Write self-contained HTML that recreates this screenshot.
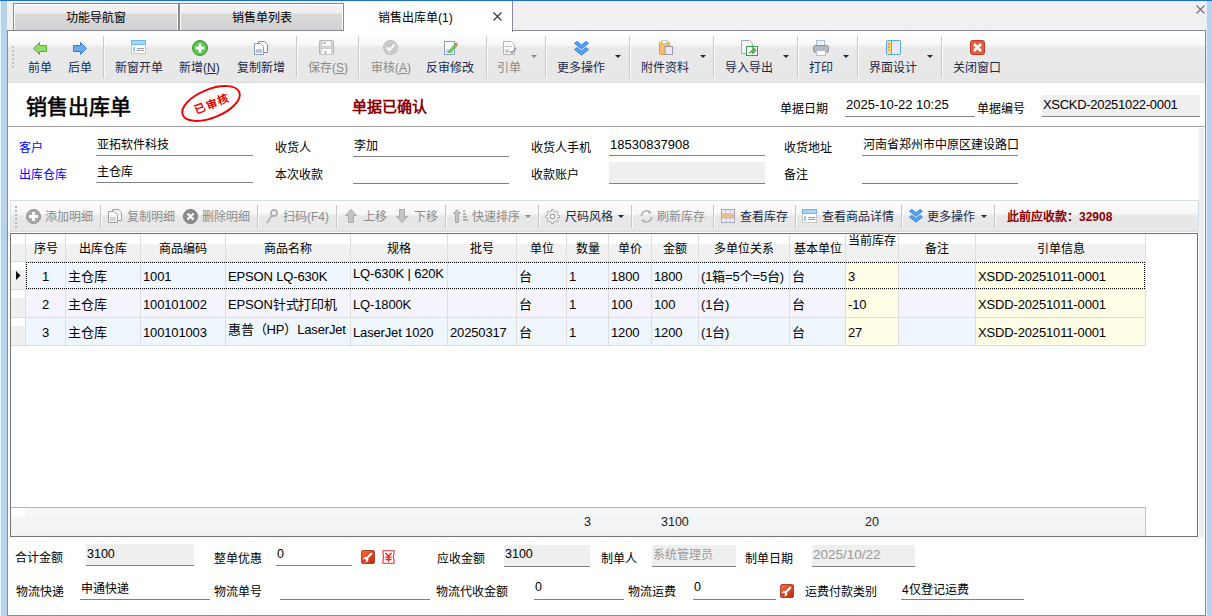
<!DOCTYPE html>
<html lang="zh-CN">
<head>
<meta charset="utf-8">
<style>
*{box-sizing:border-box;margin:0;padding:0}
html,body{width:1212px;height:616px;overflow:hidden;background:#fff;font-family:"Liberation Sans",sans-serif;font-size:12px;color:#000}
.a{position:absolute;white-space:nowrap}
.tab{top:3px;height:28px;border:1px solid #878a92;border-bottom:none;box-shadow:inset 1px 1px 0 #fff,inset -1px 0 0 #fff;background:linear-gradient(#f3f3f3 0,#efefef 9px,#d9d9d9 10px,#d2d2d2 100%);text-align:center;line-height:29px;font-size:12px;color:#000}
.tbl{top:58px;font-size:12px;color:#1c2a48}
.tbl.dis{color:#8a8a8a}
.sep{top:36px;width:2px;height:42px;background:linear-gradient(90deg,#c9c9c9 50%,#fbfbfb 50%)}
.dd{width:0;height:0;border-left:3px solid transparent;border-right:3px solid transparent;border-top:3px solid #1c2a48;top:55px}
.blue{color:#0000ff}
.ul{height:1px;background:#828282}
.gf{background:#efefef}
</style>
</head>
<body>
<div class="a" style="left:0;top:0;width:7px;height:616px;background:#b9d1ea;border-left:1px solid #e2f6fe"></div>
<div class="a" style="left:1206px;top:0;width:6px;height:616px;background:#b9d1ea;border-left:1px solid #e4eef8"></div>
<div class="a" style="left:7px;top:1px;width:1199px;height:29px;background:#f0f0f0"></div>
<div class="a" style="left:0;top:0;width:1212px;height:1px;background:#1a6fd0"></div>
<div class="a tab" style="left:13px;width:166px">功能导航窗</div>
<div class="a tab" style="left:179px;width:165px">销售单列表</div>
<svg class="a" style="left:1196px;top:5px" width="9" height="9" viewBox="0 0 9 9"><path d="M0.5 0.5l8 8M8.5 0.5l-8 8" stroke="#6a7080" stroke-width="1.1"/></svg>
<div class="a" style="left:7px;top:30px;width:1199px;height:53px;border-top:1px solid #878a92;border-left:1px solid #878a92;border-right:1px solid #878a92;background:linear-gradient(#fff 0,#f7f7f7 14px,#e9e9e9 16px,#e7e7e7 100%)"></div>
<div class="a" style="left:8px;top:31px;width:1196px;height:1px;background:#fff"></div>
<div class="a" style="left:344px;top:1px;width:169px;height:31px;background:#fff;border-right:1px solid #878a92"></div>
<div class="a" style="left:512px;top:30px;width:1px;height:1px;background:#878a92"></div>
<div class="a" style="left:12px;top:46px;width:2px;height:23px;background:repeating-linear-gradient(#c4c4c4 0,#c4c4c4 2px,transparent 2px,transparent 4px)"></div>
<div class="a" style="left:378px;top:8px;font-size:12px">销售出库单(1)</div>
<svg class="a" style="left:493px;top:12px" width="9" height="9" viewBox="0 0 9 9"><path d="M0.5 0.5l8 8M8.5 0.5l-8 8" stroke="#333" stroke-width="1.1"/></svg>

<svg class="a" style="left:33px;top:42px" width="14" height="13" viewBox="0 0 14 13"><path d="M0.5 6.5 L6.5 0.5 V3.5 H13.5 V9.5 H6.5 V12.5 Z" fill="#8fdc6a" stroke="#52b535" stroke-width="1"/></svg>
<svg class="a" style="left:73px;top:42px" width="14" height="13" viewBox="0 0 14 13"><path d="M13.5 6.5 L7.5 0.5 V3.5 H0.5 V9.5 H7.5 V12.5 Z" fill="#6aa9ee" stroke="#3a7fd0" stroke-width="1"/></svg>
<svg class="a" style="left:131px;top:40px" width="15" height="14" viewBox="0 0 15 14"><rect x="0.5" y="0.5" width="14" height="13" fill="#fff" stroke="#c8c8c8"/><rect x="0.5" y="0.5" width="14" height="4" fill="#a6d6f6" stroke="#6cb8ea"/><rect x="2" y="7" width="2" height="5" fill="#9cccf0"/><rect x="6" y="8" width="7" height="1" fill="#a0a0a0"/><rect x="6" y="10" width="7" height="1" fill="#a0a0a0"/></svg>
<svg class="a" style="left:192px;top:40px" width="16" height="16" viewBox="0 0 16 16"><circle cx="8" cy="8" r="7.5" fill="#5cc24a" stroke="#3a9a2e"/><path d="M6.5 3.5h3v3h3v3h-3v3h-3v-3h-3v-3h3z" fill="#fff"/></svg>
<svg class="a" style="left:254px;top:41px" width="15" height="14" viewBox="0 0 15 14"><path d="M4.5 0.5h6l3 3v8h-9z" fill="#fff" stroke="#9a7ac8"/><path d="M0.5 2.5h6l3 3v8h-9z" fill="#fff" stroke="#8a9cc0"/><rect x="2" y="8" width="6" height="4" fill="#b8c4e4"/></svg>
<svg class="a" style="left:319px;top:40px" width="15" height="15" viewBox="0 0 15 15"><rect x="0.5" y="0.5" width="14" height="14" rx="1" fill="#d4d4d4" stroke="#b4b4b4"/><rect x="3" y="1" width="9" height="5.5" fill="#fbfbfb" stroke="#c4c4c4" stroke-width="0.6"/><rect x="2.5" y="8.5" width="10" height="6" fill="#fbfbfb" stroke="#c4c4c4" stroke-width="0.6"/><rect x="4.5" y="2" width="2" height="2" fill="#a8a8a8"/><rect x="5.5" y="11" width="2" height="3.5" fill="#b8b8b8"/></svg>
<svg class="a" style="left:383px;top:40px" width="15" height="15" viewBox="0 0 15 15"><circle cx="7.5" cy="7.5" r="6.8" fill="#d6d6d6" stroke="#bcbcbc" stroke-width="1.2"/><circle cx="7.5" cy="7.5" r="5.2" fill="#c8c8c8"/><path d="M4 7.5l2.5 2.8 4.8-5.5" fill="none" stroke="#fafafa" stroke-width="2.2"/></svg>
<svg class="a" style="left:444px;top:41px" width="14" height="14" viewBox="0 0 14 14"><rect x="0.5" y="0.5" width="10" height="13" fill="#fff" stroke="#8aa0c8"/><rect x="2" y="8" width="7" height="4" fill="#c8d4ec"/><path d="M4 11 L11 3 L13 5 L6 12 Z" fill="#6cd050" stroke="#48a838" stroke-width="0.6"/><circle cx="12" cy="3" r="1.6" fill="#f07070"/></svg>
<svg class="a" style="left:503px;top:41px" width="14" height="14" viewBox="0 0 14 14"><path d="M0.5 0.5h8l3 3v10h-11z" fill="#fafafa" stroke="#b4b4b4"/><rect x="2" y="5" width="7" height="1" fill="#c0c0c0"/><rect x="2" y="8" width="4" height="4" fill="#d0d0d0"/><path d="M7 10l2 2 4-5" fill="none" stroke="#9a9a9a" stroke-width="1.6"/></svg>
<svg class="a" style="left:574px;top:41px" width="15" height="15" viewBox="0 0 15 15"><path d="M0.5 2.4L3 0.4 7.5 3.9 12 0.4 14.5 2.4 7.5 7.9z M0.5 8.6L3 6.6 7.5 10.1 12 6.6 14.5 8.6 7.5 14.1z" fill="#4ea4f4" stroke="#2c6fd6" stroke-width="0.8" stroke-linejoin="round"/></svg>
<svg class="a" style="left:659px;top:40px" width="14" height="15" viewBox="0 0 14 15"><rect x="0.5" y="2" width="10" height="12.5" rx="1.5" fill="#f8bc6a" stroke="#e89a40"/><rect x="3" y="0.5" width="5" height="3" fill="#fff" stroke="#aaa" stroke-width="0.6"/><rect x="6" y="6.5" width="7.5" height="8" fill="#e8e8f4" stroke="#9a9aa8"/></svg>
<svg class="a" style="left:741px;top:40px" width="17" height="16" viewBox="0 0 17 16"><path d="M0.5 0.5h8l3 3v10h-11z" fill="#f4f6ff" stroke="#9aa8d8"/><rect x="5.5" y="6.5" width="11" height="9" fill="#fff" stroke="#3aa040"/><path d="M8 13c3 0 2-3 4-3v-2l2.5 2.5-2.5 2.5v-2" fill="none" stroke="#3aa040" stroke-width="1.4"/></svg>
<svg class="a" style="left:813px;top:40px" width="16" height="16" viewBox="0 0 16 16"><rect x="3.5" y="0.5" width="8" height="6" fill="#eef4ff" stroke="#a8c0e8"/><rect x="0.5" y="5.5" width="15" height="7" rx="2" fill="#b8b8b8" stroke="#909090"/><rect x="3.5" y="10.5" width="9" height="5" fill="#fff" stroke="#a8c0e8"/></svg>
<svg class="a" style="left:886px;top:40px" width="15" height="15" viewBox="0 0 15 15"><rect x="0.5" y="0.5" width="14" height="14" rx="1" fill="#e8e8fa" stroke="#58a8e8"/><rect x="1" y="1" width="4" height="13" fill="#f8e070"/><path d="M2 4h2M2 7h2M2 10h2" stroke="#e06060" stroke-width="1"/><rect x="5" y="1" width="1" height="13" fill="#58a8e8"/></svg>
<svg class="a" style="left:970px;top:40px" width="15" height="15" viewBox="0 0 15 15"><rect x="0.5" y="0.5" width="14" height="14" rx="2" fill="#e85a40" stroke="#c03a28"/><path d="M4 4l7 7M11 4l-7 7" stroke="#fff" stroke-width="2.8"/></svg>

<div class="a tbl" style="left:28px">前单</div>
<div class="a tbl" style="left:68px">后单</div>
<div class="a sep" style="left:103px"></div>
<div class="a tbl" style="left:115px">新窗开单</div>
<div class="a tbl" style="left:179px">新增(<u>N</u>)</div>
<div class="a tbl" style="left:237px">复制新增</div>
<div class="a sep" style="left:296px"></div>
<div class="a tbl dis" style="left:308px">保存(<u>S</u>)</div>
<div class="a sep" style="left:358px"></div>
<div class="a tbl dis" style="left:371px">审核(<u>A</u>)</div>
<div class="a tbl" style="left:426px">反审修改</div>
<div class="a sep" style="left:486px"></div>
<div class="a tbl dis" style="left:497px">引单</div>
<div class="a dd" style="left:531px;border-top-color:#8a8a8a"></div>
<div class="a sep" style="left:545px"></div>
<div class="a tbl" style="left:557px">更多操作</div>
<div class="a dd" style="left:615px"></div>
<div class="a sep" style="left:629px"></div>
<div class="a tbl" style="left:641px">附件资料</div>
<div class="a dd" style="left:700px"></div>
<div class="a sep" style="left:713px"></div>
<div class="a tbl" style="left:725px">导入导出</div>
<div class="a dd" style="left:783px"></div>
<div class="a sep" style="left:797px"></div>
<div class="a tbl" style="left:809px">打印</div>
<div class="a dd" style="left:843px"></div>
<div class="a sep" style="left:857px"></div>
<div class="a tbl" style="left:869px">界面设计</div>
<div class="a dd" style="left:927px"></div>
<div class="a sep" style="left:941px"></div>
<div class="a tbl" style="left:953px">关闭窗口</div>
<div class="a" style="left:7px;top:82px;width:1px;height:534px;background:#878a92"></div>
<div class="a" style="left:1205px;top:30px;width:1px;height:586px;background:#878a92"></div>
<div class="a" style="left:1204px;top:83px;width:1px;height:531px;background:#fff"></div>
<div class="a" style="left:7px;top:615px;width:1199px;height:1px;background:#878a92"></div>
<div class="a" style="left:8px;top:82px;width:1196px;height:1px;background:#d8d8d8"></div>
<div class="a" style="left:26px;top:90px;font-family:'Liberation Serif',serif;font-size:21px;font-weight:normal;-webkit-text-stroke:0.6px #000">销售出库单</div>
<svg class="a" style="left:176px;top:83px" width="72" height="42" viewBox="0 0 72 42"><ellipse cx="35" cy="20.5" rx="30.5" ry="14.2" transform="rotate(-22 35 20.5)" fill="none" stroke="#f00000" stroke-width="1.9"/><text x="36" y="25" text-anchor="middle" transform="rotate(-20 35 20.5)" font-family="Liberation Sans" font-size="11" font-weight="bold" fill="#f00000" letter-spacing="1.6">已审核</text></svg>
<div class="a" style="left:352px;top:95px;font-size:15px;font-weight:bold;color:#8b0000">单据已确认</div>
<div class="a" style="left:780px;top:99px">单据日期</div>
<div class="a" style="left:846px;top:97px;font-size:13px">2025-10-22 10:25</div>
<div class="a ul" style="left:845px;top:116px;width:130px"></div>
<div class="a" style="left:977px;top:99px">单据编号</div>
<div class="a gf" style="left:1042px;top:95px;width:158px;height:21px"></div>
<div class="a" style="left:1043px;top:97px;font-size:13px;letter-spacing:-0.3px">XSCKD-20251022-0001</div>
<div class="a ul" style="left:1042px;top:116px;width:158px"></div>
<div class="a" style="left:8px;top:126px;width:1197px;height:1px;background:#a0a0a0"></div>
<div class="a" style="left:1199px;top:128px;width:5px;height:410px;background:#efefef"></div>
<div class="a" style="left:19px;top:138px;color:#0000ff">客户</div>
<div class="a ul" style="left:96px;top:155px;width:157px"></div>
<div class="a" style="left:97px;top:135px;font-size:12px">亚拓软件科技</div>
<div class="a" style="left:19px;top:165px;color:#0000ff">出库仓库</div>
<div class="a ul" style="left:96px;top:182px;width:157px"></div>
<div class="a" style="left:97px;top:162px;font-size:12px">主仓库</div>
<div class="a" style="left:275px;top:138px">收货人</div>
<div class="a ul" style="left:353px;top:156px;width:156px"></div>
<div class="a" style="left:354px;top:136px;font-size:12px">李加</div>
<div class="a" style="left:275px;top:165px">本次收款</div>
<div class="a ul" style="left:353px;top:183px;width:156px"></div>
<div class="a" style="left:531px;top:138px">收货人手机</div>
<div class="a ul" style="left:609px;top:155px;width:156px"></div>
<div class="a" style="left:610px;top:137px;font-size:13px">18530837908</div>
<div class="a" style="left:531px;top:165px">收款账户</div>
<div class="a gf" style="left:609px;top:162px;width:156px;height:21px"></div>
<div class="a ul" style="left:609px;top:183px;width:156px"></div>
<div class="a" style="left:784px;top:138px">收货地址</div>
<div class="a ul" style="left:862px;top:155px;width:156px"></div>
<div class="a" style="left:863px;top:135px;font-size:12px">河南省郑州市中原区建设路口</div>
<div class="a" style="left:784px;top:165px">备注</div>
<div class="a ul" style="left:862px;top:183px;width:156px"></div>
<div class="a" style="left:10px;top:200px;width:1189px;height:32px;border:1px solid #d3dee9;background:linear-gradient(#fefefe 0,#f6f6f6 13px,#e8e8e8 15px,#e6e6e6 100%)"></div>
<div class="a" style="left:15px;top:206px;width:2px;height:22px;background:repeating-linear-gradient(#b8b8b8 0,#b8b8b8 2px,transparent 2px,transparent 4px)"></div>
<svg class="a" style="left:26px;top:209px" width="15" height="15" viewBox="0 0 15 15"><circle cx="7.5" cy="7.5" r="7" fill="#a8a8a8" stroke="#909090"/><path d="M6 3h3v3h3v3h-3v3h-3v-3h-3v-3h3z" fill="#fff"/></svg>
<div class="a" style="left:45px;top:207px;color:#8c8c8c">添加明细</div>
<div class="a" style="left:100px;top:205px;width:2px;height:23px;background:linear-gradient(90deg,#c6c6c6 50%,#fbfbfb 50%)"></div>
<svg class="a" style="left:108px;top:209px" width="14" height="14" viewBox="0 0 14 14"><path d="M4.5 0.5h6l3 3v8h-9z" fill="#f4f4f4" stroke="#a0a0a0"/><path d="M0.5 2.5h6l3 3v8h-9z" fill="#fafafa" stroke="#a0a0a0"/><rect x="2" y="8" width="6" height="4" fill="#d4d4d4"/></svg>
<div class="a" style="left:127px;top:207px;color:#8c8c8c">复制明细</div>
<svg class="a" style="left:183px;top:209px" width="15" height="15" viewBox="0 0 15 15"><circle cx="7.5" cy="7.5" r="7" fill="#8c8c8c" stroke="#787878"/><path d="M4.5 4.5l6 6M10.5 4.5l-6 6" stroke="#fff" stroke-width="2.2"/></svg>
<div class="a" style="left:202px;top:207px;color:#8c8c8c">删除明细</div>
<div class="a" style="left:257px;top:205px;width:2px;height:23px;background:linear-gradient(90deg,#c6c6c6 50%,#fbfbfb 50%)"></div>
<svg class="a" style="left:266px;top:209px" width="12" height="15" viewBox="0 0 12 15"><circle cx="8" cy="4" r="3" fill="none" stroke="#b0b0b0" stroke-width="1.8"/><path d="M6 6l-5 8" stroke="#b8b8b8" stroke-width="2"/></svg>
<div class="a" style="left:283px;top:207px;color:#8c8c8c">扫码(F4)</div>
<div class="a" style="left:336px;top:205px;width:2px;height:23px;background:linear-gradient(90deg,#c6c6c6 50%,#fbfbfb 50%)"></div>
<svg class="a" style="left:345px;top:209px" width="12" height="14" viewBox="0 0 12 14"><path d="M6 0.5l5.5 6h-3v7h-5v-7h-3z" fill="#c4c4c4" stroke="#a8a8a8"/></svg>
<div class="a" style="left:363px;top:207px;color:#8c8c8c">上移</div>
<svg class="a" style="left:396px;top:209px" width="12" height="14" viewBox="0 0 12 14"><path d="M6 13.5l5.5-6h-3v-7h-5v7h-3z" fill="#c4c4c4" stroke="#a8a8a8"/></svg>
<div class="a" style="left:414px;top:207px;color:#8c8c8c">下移</div>
<div class="a" style="left:445px;top:205px;width:2px;height:23px;background:linear-gradient(90deg,#c6c6c6 50%,#fbfbfb 50%)"></div>
<svg class="a" style="left:453px;top:209px" width="16" height="14" viewBox="0 0 16 14"><path d="M4 0.5l3.5 4h-2v9h-3v-9h-2z" fill="#c4c4c4" stroke="#a8a8a8"/><path d="M10 2h2M10 5h3M10 8h4M10 11h5" stroke="#a0a0a0" stroke-width="1.5"/></svg>
<div class="a" style="left:472px;top:207px;color:#8c8c8c">快速排序</div>
<div class="a dd" style="left:525px;top:215px;border-top-color:#8c8c8c"></div>
<div class="a" style="left:538px;top:205px;width:2px;height:23px;background:linear-gradient(90deg,#c6c6c6 50%,#fbfbfb 50%)"></div>
<svg class="a" style="left:545px;top:209px" width="15" height="15" viewBox="0 0 15 15"><path d="M12.67 6.34 L14.44 6.59 L14.44 8.41 L12.67 8.66 L11.98 10.34 L13.05 11.77 L11.77 13.05 L10.34 11.98 L8.66 12.67 L8.41 14.44 L6.59 14.44 L6.34 12.67 L4.66 11.98 L3.23 13.05 L1.95 11.77 L3.02 10.34 L2.33 8.66 L0.56 8.41 L0.56 6.59 L2.33 6.34 L3.02 4.66 L1.95 3.23 L3.23 1.95 L4.66 3.02 L6.34 2.33 L6.59 0.56 L8.41 0.56 L8.66 2.33 L10.34 3.02 L11.77 1.95 L13.05 3.23 L11.98 4.66z" fill="#fafafa" stroke="#a4a4a4" stroke-width="1"/><circle cx="7.5" cy="7.5" r="2.4" fill="none" stroke="#a4a4a4" stroke-width="1.2"/></svg>
<div class="a" style="left:565px;top:207px;color:#1c2a48">尺码风格</div>
<div class="a dd" style="left:618px;top:215px;border-top-color:#1c2a48"></div>
<div class="a" style="left:631px;top:205px;width:2px;height:23px;background:linear-gradient(90deg,#c6c6c6 50%,#fbfbfb 50%)"></div>
<svg class="a" style="left:639px;top:209px" width="15" height="15" viewBox="0 0 15 15"><path d="M2.5 7a5 5 0 0 1 9-3M12.5 8a5 5 0 0 1-9 3" fill="none" stroke="#b4b4b4" stroke-width="1.8"/><path d="M10 1l3 3-3.5 1z M5 14l-3-3 3.5-1z" fill="#b4b4b4"/></svg>
<div class="a" style="left:657px;top:207px;color:#8c8c8c">刷新库存</div>
<div class="a" style="left:713px;top:205px;width:2px;height:23px;background:linear-gradient(90deg,#c6c6c6 50%,#fbfbfb 50%)"></div>
<svg class="a" style="left:721px;top:209px" width="14" height="14" viewBox="0 0 14 14"><rect x="0.5" y="0.5" width="13" height="13" fill="#ececfa" stroke="#a8a8c0"/><rect x="1" y="4.8" width="12" height="4.4" fill="#f8c070"/><path d="M4.8 0.5v13M9.2 0.5v13M0.5 4.8h13M0.5 9.2h13" stroke="#c0c0d8" stroke-width="0.8"/></svg>
<div class="a" style="left:740px;top:207px;color:#1c2a48">查看库存</div>
<div class="a" style="left:795px;top:205px;width:2px;height:23px;background:linear-gradient(90deg,#c6c6c6 50%,#fbfbfb 50%)"></div>
<svg class="a" style="left:802px;top:209px" width="15" height="14" viewBox="0 0 15 14"><rect x="0.5" y="0.5" width="14" height="13" fill="#fff" stroke="#c8c8c8"/><rect x="0.5" y="0.5" width="14" height="4" fill="#a6d6f6" stroke="#6cb8ea"/><rect x="2" y="7" width="2" height="5" fill="#9cccf0"/><rect x="6" y="8" width="7" height="1" fill="#a0a0a0"/><rect x="6" y="10" width="7" height="1" fill="#a0a0a0"/></svg>
<div class="a" style="left:822px;top:207px;color:#1c2a48">查看商品详情</div>
<div class="a" style="left:901px;top:205px;width:2px;height:23px;background:linear-gradient(90deg,#c6c6c6 50%,#fbfbfb 50%)"></div>
<svg class="a" style="left:909px;top:209px" width="14" height="14" viewBox="0 0 15 15"><path d="M0.5 2.4L3 0.4 7.5 3.9 12 0.4 14.5 2.4 7.5 7.9z M0.5 8.6L3 6.6 7.5 10.1 12 6.6 14.5 8.6 7.5 14.1z" fill="#4ea4f4" stroke="#2c6fd6" stroke-width="0.8" stroke-linejoin="round"/></svg>
<div class="a" style="left:927px;top:207px;color:#1c2a48">更多操作</div>
<div class="a dd" style="left:981px;top:215px;border-top-color:#1c2a48"></div>
<div class="a" style="left:994px;top:205px;width:2px;height:23px;background:linear-gradient(90deg,#c6c6c6 50%,#fbfbfb 50%)"></div>
<div class="a" style="left:1007px;top:207px;font-size:12px;font-weight:bold;color:#8b0000">此前应收款：32908</div>
<div class="a" style="left:10px;top:233px;width:1188px;height:304px;border:1px solid #727272;background:#fff"></div>
<div class="a" style="left:11px;top:234px;width:15px;height:28px;border-right:1px solid #dedede;border-bottom:1px solid #dedede;background:linear-gradient(#fff 0,#fff 10px,#f1f1f1 10px,#f1f1f1 100%);text-align:center;line-height:31px"></div>
<div class="a" style="left:26px;top:234px;width:40px;height:28px;border-right:1px solid #dedede;border-bottom:1px solid #dedede;background:linear-gradient(#fff 0,#fff 10px,#f1f1f1 10px,#f1f1f1 100%);text-align:center;line-height:31px">序号</div>
<div class="a" style="left:66px;top:234px;width:75px;height:28px;border-right:1px solid #dedede;border-bottom:1px solid #dedede;background:linear-gradient(#fff 0,#fff 10px,#f1f1f1 10px,#f1f1f1 100%);text-align:center;line-height:31px">出库仓库</div>
<div class="a" style="left:141px;top:234px;width:85px;height:28px;border-right:1px solid #dedede;border-bottom:1px solid #dedede;background:linear-gradient(#fff 0,#fff 10px,#f1f1f1 10px,#f1f1f1 100%);text-align:center;line-height:31px">商品编码</div>
<div class="a" style="left:226px;top:234px;width:125px;height:28px;border-right:1px solid #dedede;border-bottom:1px solid #dedede;background:linear-gradient(#fff 0,#fff 10px,#f1f1f1 10px,#f1f1f1 100%);text-align:center;line-height:31px">商品名称</div>
<div class="a" style="left:351px;top:234px;width:97px;height:28px;border-right:1px solid #dedede;border-bottom:1px solid #dedede;background:linear-gradient(#fff 0,#fff 10px,#f1f1f1 10px,#f1f1f1 100%);text-align:center;line-height:31px">规格</div>
<div class="a" style="left:448px;top:234px;width:69px;height:28px;border-right:1px solid #dedede;border-bottom:1px solid #dedede;background:linear-gradient(#fff 0,#fff 10px,#f1f1f1 10px,#f1f1f1 100%);text-align:center;line-height:31px">批号</div>
<div class="a" style="left:517px;top:234px;width:50px;height:28px;border-right:1px solid #dedede;border-bottom:1px solid #dedede;background:linear-gradient(#fff 0,#fff 10px,#f1f1f1 10px,#f1f1f1 100%);text-align:center;line-height:31px">单位</div>
<div class="a" style="left:567px;top:234px;width:42px;height:28px;border-right:1px solid #dedede;border-bottom:1px solid #dedede;background:linear-gradient(#fff 0,#fff 10px,#f1f1f1 10px,#f1f1f1 100%);text-align:center;line-height:31px">数量</div>
<div class="a" style="left:609px;top:234px;width:43px;height:28px;border-right:1px solid #dedede;border-bottom:1px solid #dedede;background:linear-gradient(#fff 0,#fff 10px,#f1f1f1 10px,#f1f1f1 100%);text-align:center;line-height:31px">单价</div>
<div class="a" style="left:652px;top:234px;width:47px;height:28px;border-right:1px solid #dedede;border-bottom:1px solid #dedede;background:linear-gradient(#fff 0,#fff 10px,#f1f1f1 10px,#f1f1f1 100%);text-align:center;line-height:31px">金额</div>
<div class="a" style="left:699px;top:234px;width:91px;height:28px;border-right:1px solid #dedede;border-bottom:1px solid #dedede;background:linear-gradient(#fff 0,#fff 10px,#f1f1f1 10px,#f1f1f1 100%);text-align:center;line-height:31px">多单位关系</div>
<div class="a" style="left:790px;top:234px;width:56px;height:28px;border-right:1px solid #dedede;border-bottom:1px solid #dedede;background:linear-gradient(#fff 0,#fff 10px,#f1f1f1 10px,#f1f1f1 100%);text-align:center;line-height:31px">基本单位</div>
<div class="a" style="left:846px;top:234px;width:53px;height:28px;border-right:1px solid #dedede;border-bottom:1px solid #dedede;background:linear-gradient(#fff 0,#fff 10px,#f1f1f1 10px,#f1f1f1 100%);text-align:center;line-height:14px;padding-top:0">当前库存</div>
<div class="a" style="left:899px;top:234px;width:77px;height:28px;border-right:1px solid #dedede;border-bottom:1px solid #dedede;background:linear-gradient(#fff 0,#fff 10px,#f1f1f1 10px,#f1f1f1 100%);text-align:center;line-height:31px">备注</div>
<div class="a" style="left:976px;top:234px;width:170px;height:28px;border-right:1px solid #dedede;border-bottom:1px solid #dedede;background:linear-gradient(#fff 0,#fff 10px,#f1f1f1 10px,#f1f1f1 100%);text-align:center;line-height:31px">引单信息</div>
<div class="a" style="left:11px;top:262px;width:15px;height:28px;border-right:1px solid #dedede;border-bottom:1px solid #dedede;background:linear-gradient(#fff 0,#fff 8px,#efefef 8px,#efefef 100%)"></div>
<div class="a" style="left:26px;top:262px;width:40px;height:28px;border-right:1px solid #dedede;border-bottom:1px solid #dedede;background:#eff6fe;text-align:center;line-height:29px;font-size:13px;letter-spacing:-0.15px;overflow:hidden">1</div>
<div class="a" style="left:66px;top:262px;width:75px;height:28px;border-right:1px solid #dedede;border-bottom:1px solid #dedede;background:#eff6fe;padding-left:2px;line-height:29px;font-size:13px;letter-spacing:-0.15px;overflow:hidden">主仓库</div>
<div class="a" style="left:141px;top:262px;width:85px;height:28px;border-right:1px solid #dedede;border-bottom:1px solid #dedede;background:#eff6fe;padding-left:2px;line-height:29px;font-size:13px;letter-spacing:-0.15px;overflow:hidden">1001</div>
<div class="a" style="left:226px;top:262px;width:125px;height:28px;border-right:1px solid #dedede;border-bottom:1px solid #dedede;background:#eff6fe;padding-left:2px;line-height:29px;font-size:13px;letter-spacing:-0.15px;overflow:hidden">EPSON LQ-630K</div>
<div class="a" style="left:351px;top:262px;width:97px;height:28px;border-right:1px solid #dedede;border-bottom:1px solid #dedede;background:#eff6fe;padding-left:2px;line-height:23px;font-size:13px;letter-spacing:-0.15px;overflow:hidden">LQ-630K | 620K</div>
<div class="a" style="left:448px;top:262px;width:69px;height:28px;border-right:1px solid #dedede;border-bottom:1px solid #dedede;background:#eff6fe;padding-left:2px;line-height:29px;font-size:13px;letter-spacing:-0.15px;overflow:hidden"></div>
<div class="a" style="left:517px;top:262px;width:50px;height:28px;border-right:1px solid #dedede;border-bottom:1px solid #dedede;background:#eff6fe;padding-left:2px;line-height:29px;font-size:13px;letter-spacing:-0.15px;overflow:hidden">台</div>
<div class="a" style="left:567px;top:262px;width:42px;height:28px;border-right:1px solid #dedede;border-bottom:1px solid #dedede;background:#eff6fe;padding-left:2px;line-height:29px;font-size:13px;letter-spacing:-0.15px;overflow:hidden">1</div>
<div class="a" style="left:609px;top:262px;width:43px;height:28px;border-right:1px solid #dedede;border-bottom:1px solid #dedede;background:#eff6fe;padding-left:2px;line-height:29px;font-size:13px;letter-spacing:-0.15px;overflow:hidden">1800</div>
<div class="a" style="left:652px;top:262px;width:47px;height:28px;border-right:1px solid #dedede;border-bottom:1px solid #dedede;background:#eff6fe;padding-left:2px;line-height:29px;font-size:13px;letter-spacing:-0.15px;overflow:hidden">1800</div>
<div class="a" style="left:699px;top:262px;width:91px;height:28px;border-right:1px solid #dedede;border-bottom:1px solid #dedede;background:#eff6fe;padding-left:2px;line-height:29px;font-size:13px;letter-spacing:-0.15px;overflow:hidden">(1箱=5个=5台)</div>
<div class="a" style="left:790px;top:262px;width:56px;height:28px;border-right:1px solid #dedede;border-bottom:1px solid #dedede;background:#eff6fe;padding-left:2px;line-height:29px;font-size:13px;letter-spacing:-0.15px;overflow:hidden">台</div>
<div class="a" style="left:846px;top:262px;width:53px;height:28px;border-right:1px solid #dedede;border-bottom:1px solid #dedede;background:#fffde6;padding-left:2px;line-height:29px;font-size:13px;letter-spacing:-0.15px;overflow:hidden">3</div>
<div class="a" style="left:899px;top:262px;width:77px;height:28px;border-right:1px solid #dedede;border-bottom:1px solid #dedede;background:#eff6fe;padding-left:2px;line-height:29px;font-size:13px;letter-spacing:-0.15px;overflow:hidden"></div>
<div class="a" style="left:976px;top:262px;width:170px;height:28px;border-right:1px solid #dedede;border-bottom:1px solid #dedede;background:#fffde6;padding-left:2px;line-height:29px;font-size:13px;letter-spacing:-0.15px;overflow:hidden">XSDD-20251011-0001</div>
<div class="a" style="left:11px;top:290px;width:15px;height:28px;border-right:1px solid #dedede;border-bottom:1px solid #dedede;background:linear-gradient(#fff 0,#fff 8px,#efefef 8px,#efefef 100%)"></div>
<div class="a" style="left:26px;top:290px;width:40px;height:28px;border-right:1px solid #dedede;border-bottom:1px solid #dedede;background:#f5f4fd;text-align:center;line-height:29px;font-size:13px;letter-spacing:-0.15px;overflow:hidden">2</div>
<div class="a" style="left:66px;top:290px;width:75px;height:28px;border-right:1px solid #dedede;border-bottom:1px solid #dedede;background:#f5f4fd;padding-left:2px;line-height:29px;font-size:13px;letter-spacing:-0.15px;overflow:hidden">主仓库</div>
<div class="a" style="left:141px;top:290px;width:85px;height:28px;border-right:1px solid #dedede;border-bottom:1px solid #dedede;background:#f5f4fd;padding-left:2px;line-height:29px;font-size:13px;letter-spacing:-0.15px;overflow:hidden">100101002</div>
<div class="a" style="left:226px;top:290px;width:125px;height:28px;border-right:1px solid #dedede;border-bottom:1px solid #dedede;background:#f5f4fd;padding-left:2px;line-height:29px;font-size:13px;letter-spacing:-0.15px;overflow:hidden">EPSON针式打印机</div>
<div class="a" style="left:351px;top:290px;width:97px;height:28px;border-right:1px solid #dedede;border-bottom:1px solid #dedede;background:#f5f4fd;padding-left:2px;line-height:29px;font-size:13px;letter-spacing:-0.15px;overflow:hidden">LQ-1800K</div>
<div class="a" style="left:448px;top:290px;width:69px;height:28px;border-right:1px solid #dedede;border-bottom:1px solid #dedede;background:#f5f4fd;padding-left:2px;line-height:29px;font-size:13px;letter-spacing:-0.15px;overflow:hidden"></div>
<div class="a" style="left:517px;top:290px;width:50px;height:28px;border-right:1px solid #dedede;border-bottom:1px solid #dedede;background:#f5f4fd;padding-left:2px;line-height:29px;font-size:13px;letter-spacing:-0.15px;overflow:hidden">台</div>
<div class="a" style="left:567px;top:290px;width:42px;height:28px;border-right:1px solid #dedede;border-bottom:1px solid #dedede;background:#f5f4fd;padding-left:2px;line-height:29px;font-size:13px;letter-spacing:-0.15px;overflow:hidden">1</div>
<div class="a" style="left:609px;top:290px;width:43px;height:28px;border-right:1px solid #dedede;border-bottom:1px solid #dedede;background:#f5f4fd;padding-left:2px;line-height:29px;font-size:13px;letter-spacing:-0.15px;overflow:hidden">100</div>
<div class="a" style="left:652px;top:290px;width:47px;height:28px;border-right:1px solid #dedede;border-bottom:1px solid #dedede;background:#f5f4fd;padding-left:2px;line-height:29px;font-size:13px;letter-spacing:-0.15px;overflow:hidden">100</div>
<div class="a" style="left:699px;top:290px;width:91px;height:28px;border-right:1px solid #dedede;border-bottom:1px solid #dedede;background:#f5f4fd;padding-left:2px;line-height:29px;font-size:13px;letter-spacing:-0.15px;overflow:hidden">(1台)</div>
<div class="a" style="left:790px;top:290px;width:56px;height:28px;border-right:1px solid #dedede;border-bottom:1px solid #dedede;background:#f5f4fd;padding-left:2px;line-height:29px;font-size:13px;letter-spacing:-0.15px;overflow:hidden">台</div>
<div class="a" style="left:846px;top:290px;width:53px;height:28px;border-right:1px solid #dedede;border-bottom:1px solid #dedede;background:#fffde6;padding-left:2px;line-height:29px;font-size:13px;letter-spacing:-0.15px;overflow:hidden">-10</div>
<div class="a" style="left:899px;top:290px;width:77px;height:28px;border-right:1px solid #dedede;border-bottom:1px solid #dedede;background:#f5f4fd;padding-left:2px;line-height:29px;font-size:13px;letter-spacing:-0.15px;overflow:hidden"></div>
<div class="a" style="left:976px;top:290px;width:170px;height:28px;border-right:1px solid #dedede;border-bottom:1px solid #dedede;background:#fffde6;padding-left:2px;line-height:29px;font-size:13px;letter-spacing:-0.15px;overflow:hidden">XSDD-20251011-0001</div>
<div class="a" style="left:11px;top:318px;width:15px;height:28px;border-right:1px solid #dedede;border-bottom:1px solid #dedede;background:linear-gradient(#fff 0,#fff 8px,#efefef 8px,#efefef 100%)"></div>
<div class="a" style="left:26px;top:318px;width:40px;height:28px;border-right:1px solid #dedede;border-bottom:1px solid #dedede;background:#eff6fe;text-align:center;line-height:29px;font-size:13px;letter-spacing:-0.15px;overflow:hidden">3</div>
<div class="a" style="left:66px;top:318px;width:75px;height:28px;border-right:1px solid #dedede;border-bottom:1px solid #dedede;background:#eff6fe;padding-left:2px;line-height:29px;font-size:13px;letter-spacing:-0.15px;overflow:hidden">主仓库</div>
<div class="a" style="left:141px;top:318px;width:85px;height:28px;border-right:1px solid #dedede;border-bottom:1px solid #dedede;background:#eff6fe;padding-left:2px;line-height:29px;font-size:13px;letter-spacing:-0.15px;overflow:hidden">100101003</div>
<div class="a" style="left:226px;top:318px;width:125px;height:28px;border-right:1px solid #dedede;border-bottom:1px solid #dedede;background:#eff6fe;padding-left:2px;line-height:23px;font-size:13px;letter-spacing:-0.15px;overflow:hidden">惠普（HP）LaserJet</div>
<div class="a" style="left:351px;top:318px;width:97px;height:28px;border-right:1px solid #dedede;border-bottom:1px solid #dedede;background:#eff6fe;padding-left:2px;line-height:29px;font-size:13px;letter-spacing:-0.15px;overflow:hidden">LaserJet 1020</div>
<div class="a" style="left:448px;top:318px;width:69px;height:28px;border-right:1px solid #dedede;border-bottom:1px solid #dedede;background:#eff6fe;padding-left:2px;line-height:29px;font-size:13px;letter-spacing:-0.15px;overflow:hidden">20250317</div>
<div class="a" style="left:517px;top:318px;width:50px;height:28px;border-right:1px solid #dedede;border-bottom:1px solid #dedede;background:#eff6fe;padding-left:2px;line-height:29px;font-size:13px;letter-spacing:-0.15px;overflow:hidden">台</div>
<div class="a" style="left:567px;top:318px;width:42px;height:28px;border-right:1px solid #dedede;border-bottom:1px solid #dedede;background:#eff6fe;padding-left:2px;line-height:29px;font-size:13px;letter-spacing:-0.15px;overflow:hidden">1</div>
<div class="a" style="left:609px;top:318px;width:43px;height:28px;border-right:1px solid #dedede;border-bottom:1px solid #dedede;background:#eff6fe;padding-left:2px;line-height:29px;font-size:13px;letter-spacing:-0.15px;overflow:hidden">1200</div>
<div class="a" style="left:652px;top:318px;width:47px;height:28px;border-right:1px solid #dedede;border-bottom:1px solid #dedede;background:#eff6fe;padding-left:2px;line-height:29px;font-size:13px;letter-spacing:-0.15px;overflow:hidden">1200</div>
<div class="a" style="left:699px;top:318px;width:91px;height:28px;border-right:1px solid #dedede;border-bottom:1px solid #dedede;background:#eff6fe;padding-left:2px;line-height:29px;font-size:13px;letter-spacing:-0.15px;overflow:hidden">(1台)</div>
<div class="a" style="left:790px;top:318px;width:56px;height:28px;border-right:1px solid #dedede;border-bottom:1px solid #dedede;background:#eff6fe;padding-left:2px;line-height:29px;font-size:13px;letter-spacing:-0.15px;overflow:hidden">台</div>
<div class="a" style="left:846px;top:318px;width:53px;height:28px;border-right:1px solid #dedede;border-bottom:1px solid #dedede;background:#fffde6;padding-left:2px;line-height:29px;font-size:13px;letter-spacing:-0.15px;overflow:hidden">27</div>
<div class="a" style="left:899px;top:318px;width:77px;height:28px;border-right:1px solid #dedede;border-bottom:1px solid #dedede;background:#eff6fe;padding-left:2px;line-height:29px;font-size:13px;letter-spacing:-0.15px;overflow:hidden"></div>
<div class="a" style="left:976px;top:318px;width:170px;height:28px;border-right:1px solid #dedede;border-bottom:1px solid #dedede;background:#fffde6;padding-left:2px;line-height:29px;font-size:13px;letter-spacing:-0.15px;overflow:hidden">XSDD-20251011-0001</div>
<svg class="a" style="left:16px;top:271px" width="5" height="9" viewBox="0 0 5 9"><path d="M0 0l4.5 4.5L0 9z" fill="#000"/></svg>
<div class="a" style="left:26px;top:262px;width:1119px;height:27px;border:1px dotted #000"></div>
<div class="a" style="left:11px;top:507px;width:1135px;height:29px;border-top:1px solid #b4b4b4;border-right:1px solid #c8c8c8;background:linear-gradient(#f6f7f8 0,#f1f2f4 100%)"></div>
<div class="a" style="left:11px;top:508px;width:14px;height:8px;background:#fff"></div>
<div class="a" style="left:584px;top:515px;font-size:12.5px;color:#222">3</div>
<div class="a" style="left:661px;top:515px;font-size:12.5px;color:#222">3100</div>
<div class="a" style="left:865px;top:515px;font-size:12.5px;color:#222">20</div>
<div class="a" style="left:15px;top:548px">合计金额</div>
<div class="a gf" style="left:86px;top:544px;width:108px;height:21px"></div>
<div class="a ul" style="left:86px;top:565px;width:108px"></div>
<div class="a" style="left:87px;top:547px;font-size:12.5px">3100</div>
<div class="a" style="left:214px;top:549px">整单优惠</div>
<div class="a ul" style="left:276px;top:565px;width:76px"></div>
<div class="a" style="left:277px;top:547px;font-size:12.5px">0</div>
<svg class="a" style="left:361px;top:550px" width="14" height="14" viewBox="0 0 14 14"><defs><linearGradient id="rg361" x1="0" y1="0" x2="1" y2="1"><stop offset="0" stop-color="#ff6a40"/><stop offset="1" stop-color="#b82a10"/></linearGradient></defs><rect x="0.5" y="0.5" width="13" height="13" rx="1.5" fill="url(#rg361)" stroke="#a02a10" stroke-width="0.8"/><path d="M10.8 3.2L5.5 8.5" stroke="#fff" stroke-width="2.2"/><circle cx="4.6" cy="9.6" r="2.7" fill="#fff"/><path d="M1.2 10.6L3.4 8.4 5.6 10.6 3.4 12.8z" fill="#d84020"/></svg>
<svg class="a" style="left:382px;top:550px" width="13" height="14" viewBox="0 0 13 14"><path d="M1 0.8h11v3.5q-1.5 2.7 0 5.4v3.5h-11v-3.5q1.5-2.7 0-5.4z" fill="#fff" stroke="#e03030" stroke-width="1.1"/><path d="M3.5 3l3 3.2 3-3.2M6.5 6.2v5.5M3.5 7.2h6M3.5 9.5h6" stroke="#e02020" stroke-width="1.3" fill="none"/></svg>
<div class="a" style="left:437px;top:549px">应收金额</div>
<div class="a gf" style="left:504px;top:545px;width:86px;height:21px"></div>
<div class="a ul" style="left:504px;top:566px;width:86px"></div>
<div class="a" style="left:505px;top:547px;font-size:12.5px">3100</div>
<div class="a" style="left:601px;top:549px">制单人</div>
<div class="a gf" style="left:652px;top:545px;width:84px;height:21px"></div>
<div class="a ul" style="left:652px;top:566px;width:84px"></div>
<div class="a" style="left:653px;top:545px;font-size:12px;color:#9a9a9a">系统管理员</div>
<div class="a" style="left:745px;top:549px">制单日期</div>
<div class="a gf" style="left:812px;top:545px;width:103px;height:21px"></div>
<div class="a ul" style="left:812px;top:566px;width:103px"></div>
<div class="a" style="left:813px;top:547px;font-size:13.5px;color:#9a9a9a">2025/10/22</div>
<div class="a" style="left:16px;top:582px">物流快递</div>
<div class="a ul" style="left:80px;top:599px;width:130px"></div>
<div class="a" style="left:81px;top:579px;font-size:12px">申通快递</div>
<div class="a" style="left:214px;top:582px">物流单号</div>
<div class="a ul" style="left:280px;top:599px;width:150px"></div>
<div class="a" style="left:436px;top:582px">物流代收金额</div>
<div class="a ul" style="left:534px;top:599px;width:90px"></div>
<div class="a" style="left:535px;top:580px;font-size:12.5px">0</div>
<div class="a" style="left:628px;top:582px">物流运费</div>
<div class="a ul" style="left:693px;top:599px;width:83px"></div>
<div class="a" style="left:694px;top:580px;font-size:12.5px">0</div>
<svg class="a" style="left:780px;top:584px" width="14" height="14" viewBox="0 0 14 14"><defs><linearGradient id="rg780" x1="0" y1="0" x2="1" y2="1"><stop offset="0" stop-color="#ff6a40"/><stop offset="1" stop-color="#b82a10"/></linearGradient></defs><rect x="0.5" y="0.5" width="13" height="13" rx="1.5" fill="url(#rg780)" stroke="#a02a10" stroke-width="0.8"/><path d="M10.8 3.2L5.5 8.5" stroke="#fff" stroke-width="2.2"/><circle cx="4.6" cy="9.6" r="2.7" fill="#fff"/><path d="M1.2 10.6L3.4 8.4 5.6 10.6 3.4 12.8z" fill="#d84020"/></svg>
<div class="a" style="left:805px;top:582px">运费付款类别</div>
<div class="a ul" style="left:901px;top:599px;width:123px"></div>
<div class="a" style="left:902px;top:580px;font-size:12px">4仅登记运费</div>
</body>
</html>
